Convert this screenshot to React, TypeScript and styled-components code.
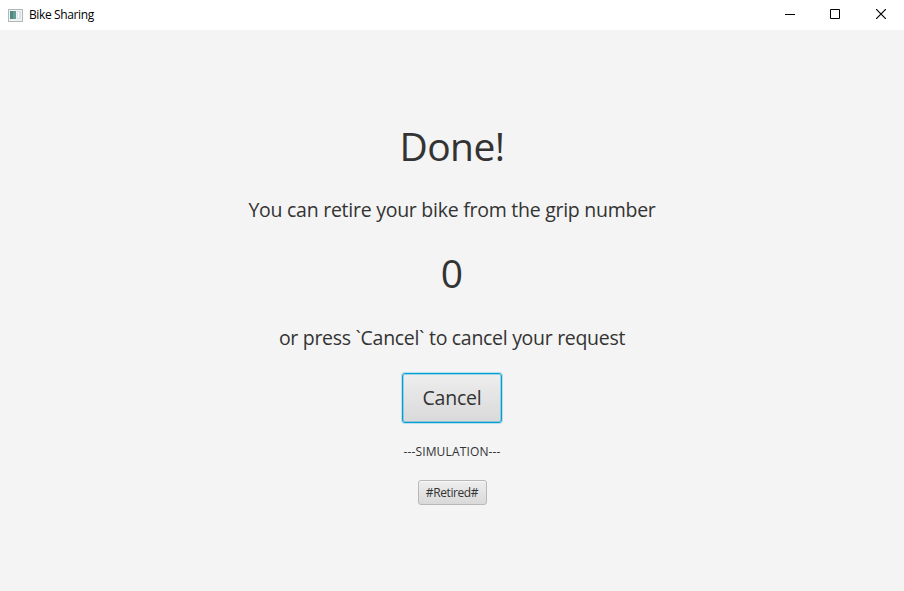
import React from "react";
import styled, { createGlobalStyle } from "styled-components";

const GlobalStyle = createGlobalStyle`
  * { box-sizing: border-box; }
  body { margin: 0; font-family: "Open Sans", "Noto Sans", sans-serif; }
`;

const Window = styled.div`
  width: 904px;
  height: 591px;
  display: flex;
  flex-direction: column;
  background: #f4f4f4;
  overflow: hidden;
`;

const TitleBar = styled.header`
  height: 30px;
  flex: none;
  background: #fff;
  display: flex;
  align-items: center;
  padding-left: 8px;
`;

const Title = styled.span`
  flex: 1;
  margin-left: 6px;
  font-size: 12px;
  letter-spacing: -0.38px;
  line-height: 30px;
  color: #000;
`;

const WindowButton = styled.button`
  width: 46px;
  height: 30px;
  border: 0;
  padding: 0 0 2px;
  background: none;
  display: flex;
  align-items: center;
  justify-content: center;
`;

const Content = styled.main`
  flex: 1;
  display: flex;
  flex-direction: column;
  align-items: center;
  padding-top: 89px;
  color: #333;
`;

const Heading = styled.h1`
  margin: 0;
  font-size: 39px;
  font-weight: 400;
  line-height: 54px;
  letter-spacing: -0.6px;
`;

const Digit = styled.div`
  font-size: 39px;
  line-height: 54px;
  margin-bottom: 1px;
`;

const Message = styled.p<{ $spacing: number }>`
  margin: 23px 0;
  font-size: 19.5px;
  letter-spacing: ${(p) => p.$spacing}px;
  line-height: 27px;
  white-space: nowrap;
`;

const Button = styled.button<{ $large?: boolean }>`
  width: ${(p) => (p.$large ? 100 : 69)}px;
  height: ${(p) => (p.$large ? 50 : 25)}px;
  margin-top: ${(p) => (p.$large ? -1 : 0)}px;
  padding: 0;
  border: 1px solid ${(p) => (p.$large ? "#039ed3" : "#b8b8b8")};
  border-radius: 3px;
  box-shadow: ${(p) => (p.$large ? "0 0 0 1px #039ed340, inset 0 0 0 1px #039ed355" : "inset 0 1px 0 #f8f8f8")};
  background: linear-gradient(#eeeeee, #d9d9d9);
  color: #333;
  font-family: inherit;
  font-size: ${(p) => (p.$large ? 19.5 : 12)}px;
  letter-spacing: ${(p) => (p.$large ? -0.2 : -0.4)}px;
  line-height: 1;
`;

const Caption = styled.div`
  margin: 20px 0;
  font-size: 12px;
  letter-spacing: 0.15px;
  line-height: 17px;
`;

function AppIcon() {
  return (
    <svg width="15" height="13" viewBox="0 0 15 13" shapeRendering="crispEdges">
      <rect x=".5" y=".5" width="14" height="12" fill="#f1f3f3" stroke="#b1b8ba" />
      <rect x="2" y="2" width="6" height="8" fill="#659c93" />
      <rect x="2" y="2" width="3" height="8" fill="#508980" />
      <rect x="9" y="2" width="4" height="8" fill="#d9e3ec" />
      <rect x="10" y="3" width="1" height="6" fill="#ffffff" />
    </svg>
  );
}

export default function App() {
  return (
    <Window>
      <GlobalStyle />
      <TitleBar>
        <AppIcon />
        <Title>Bike Sharing</Title>
        <WindowButton aria-label="Minimize">
          <svg width="12" height="10"><path d="M2 5.5H12" stroke="#000" /></svg>
        </WindowButton>
        <WindowButton aria-label="Maximize">
          <svg width="10" height="10"><path d="M.5 .5H9.5V9.5H.5Z" stroke="#000" fill="none" /></svg>
        </WindowButton>
        <WindowButton aria-label="Close">
          <svg width="10" height="10"><path d="M0 0L10 10M10 0L0 10" stroke="#000" strokeWidth="1.2" /></svg>
        </WindowButton>
      </TitleBar>
      <Content>
        <Heading>Done!</Heading>
        <Message $spacing={-0.26}>You can retire your bike from the grip number</Message>
        <Digit>0</Digit>
        <Message $spacing={-0.3}>or press `Cancel` to cancel your request</Message>
        <Button $large>Cancel</Button>
        <Caption>---SIMULATION---</Caption>
        <Button>#Retired#</Button>
      </Content>
    </Window>
  );
}
